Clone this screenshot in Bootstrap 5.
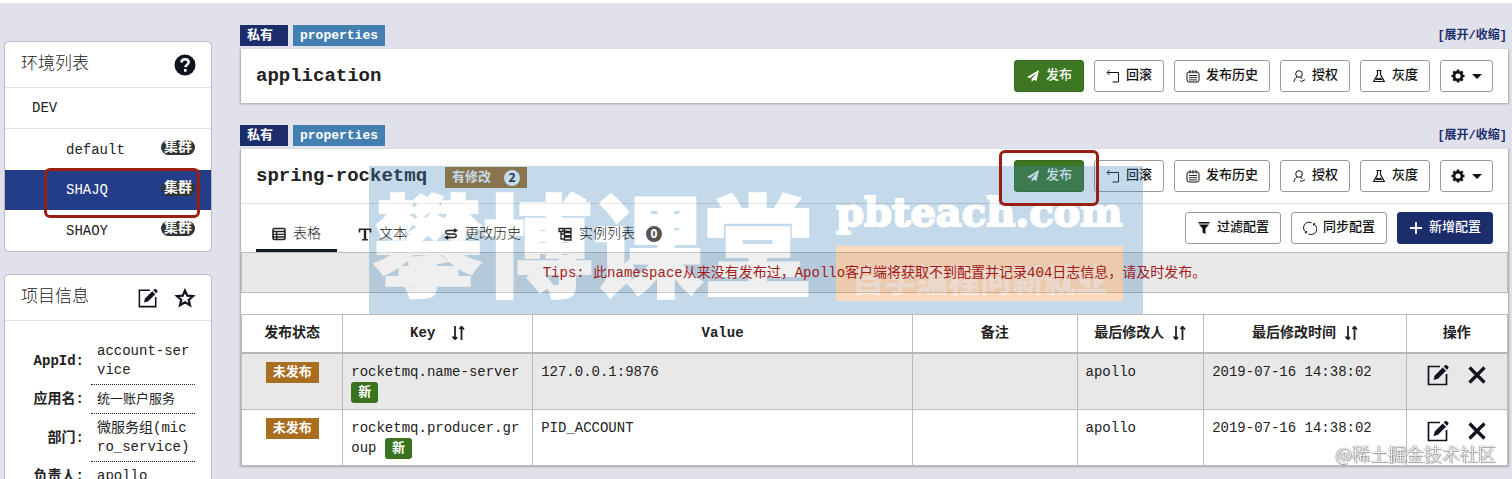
<!DOCTYPE html>
<html lang="zh-CN">
<head>
<meta charset="utf-8">
<meta name="viewport" content="width=device-width, initial-scale=1">
<title>Apollo 配置中心</title>
<link href="https://cdn.jsdelivr.net/npm/bootstrap@5.3.0/dist/css/bootstrap.min.css" rel="stylesheet">
<style>
body{font-family:"Liberation Mono","Noto Sans CJK SC",monospace;font-size:14px;line-height:20px;color:#222;background:#e0e1ea;border-top:3px solid #fff;height:100vh;overflow:hidden}
svg{display:block;fill:none;stroke:currentColor;flex:none}
.page{padding:22px 3px 0 4px;gap:28px}
.sidebar{flex:0 0 208px;margin-top:16px;gap:22px}
.side-panel{background:#fff;border:1px solid #b6b9c3;border-radius:5px}
.side-head{height:46px;padding:0 15px 0 16px;border-bottom:1px solid #dcdde3;gap:16px}
.side-head h2{font-size:17px;line-height:24px;font-weight:300;color:#222}
.icon-btn{border:0;background:none;padding:0;color:#101420}
.env-link{height:41px;padding:0 16px 0 61px;color:#222;text-decoration:none}
.env-root{padding-left:27px;border-bottom:1px solid #dcdde3}
.env-link.active{height:40px;background:#233d89;color:#fff}
.cluster{background:#333;color:#fff;font-size:14px;line-height:14px;font-weight:700;border-radius:8px;padding:0 3px;margin-bottom:4px;height:15px}
.hot{position:relative}
.hot::after{content:"";position:absolute;border:3px solid #991f12;border-radius:6px;z-index:4;pointer-events:none}
.hot-env::after{inset:-2px 11px -8px 39px}
.hot-release::after{inset:-11px -16px -15px -16px}
.info{margin:16px 16px 0 6px}
.info th{width:80px;text-align:right;padding:0 7px 0 0;vertical-align:middle;white-space:nowrap}
.info td{padding:5px 4px 4px 6px;border-bottom:1px dotted #222;line-height:19px;word-break:break-all}
.info .zh{font-size:13px}
.tags{gap:5px}
.tag{background:#1c2d6c;color:#fff;font-size:13px;line-height:21px;font-weight:700;padding:0 7px}
.tag-type{width:48px}
.tag-format{background:#447fb2}
.toggle{font-size:12px;font-weight:700;color:#1c2d6c;text-decoration:none;padding-right:2px}
.ns-panel{position:relative;background:#fff;box-shadow:0 1px 2px #a5a7b0;margin-top:3px;margin-bottom:22px;border-left:1px solid #b5b7bf;border-right:1px solid #b5b7bf}
.ns-head{height:54px;padding:0 15px}
.ns-title{font-size:19px;line-height:24px;font-weight:700;color:#222}
.act{--bs-btn-padding-x:11px;--bs-btn-padding-y:0;--bs-btn-border-radius:3px;--bs-btn-border-color:#9a9a9a;--bs-btn-bg:#fff;--bs-btn-color:#111;--bs-btn-hover-bg:#eee;--bs-btn-hover-border-color:#888;height:32px;font-size:13px;font-weight:500;line-height:20px;gap:6px;font-family:inherit}
.act.dropdown-toggle{--bs-btn-padding-x:10px}
.act.dropdown-toggle::after{border-width:5px 5px 0;margin-left:1px}
.act-green{--bs-btn-bg:#3d7721;--bs-btn-border-color:#35691c;--bs-btn-color:#fff}
.act-blue{--bs-btn-bg:#1c2d6c;--bs-btn-border-color:#1c2d6c;--bs-btn-color:#fff}
.changed{background:#a96f20;color:#fff;font-size:13px;font-weight:700;line-height:21px;padding:0 7px;margin-left:18px;margin-top:3px;gap:13px}
.dot{width:16px;height:16px;line-height:16px;border-radius:8px;text-align:center;font-family:"Open Sans",sans-serif;font-weight:700;font-size:12px}
.dot-light{background:#fff;color:#222}
.dot-dark{background:#555;color:#fff}
.tool-row{height:49px;padding:0 15px;border-top:1px solid #ddd}
.tab-list{gap:5px;position:relative;z-index:4}
.tab-list a{gap:7px;padding:0 16px;height:34px;color:#222;font-weight:300;text-decoration:none;border-bottom:3px solid transparent}
.tab-list a.active{border-color:#101c2b}
.tips{background:#e9e9e9;border:1px solid #bbb;height:41px;color:#a31a1a;margin-bottom:21px}
.tips span{position:relative;z-index:4}
.cfg{table-layout:fixed;width:100%}
.cfg th,.cfg td{border:1px solid #bbb;padding:8px}
.cfg th{text-align:center;font-weight:700}
.cfg thead tr{height:38px;border-bottom:2px solid #b5b5b5}
.cfg td{vertical-align:top;word-break:break-all;padding-bottom:6px}
.cfg tbody tr:nth-child(odd){background:#e8e8e8}
.st,.fresh{color:#fff;background:#a96f20;font-size:13px;font-weight:700;padding:3px 7px}
.fresh{background:#3a7320;border-radius:3px}
.ops{gap:19px;padding-top:2px}
.brand{position:absolute;left:128px;top:17px;width:774px;height:148px;background:#3e84b9;opacity:.3;z-index:3;pointer-events:none;color:#fff;padding:8px 20px 0 4px}
.brand-cn{font-size:110px;line-height:132px;font-weight:900;-webkit-text-stroke:2px #fff;white-space:nowrap;font-family:"Noto Sans CJK SC",sans-serif}
.brand-site{font-family:"DejaVu Serif",serif;font-weight:700;font-size:40px;line-height:44px;-webkit-text-stroke:2px #fff;margin-top:16px}
.brand-slogan{background:#f28426;width:287px;height:55px;font-size:32px;line-height:46px;color:#efb68c;font-weight:900;margin-top:12px;padding:9px 0 0 16px;white-space:nowrap;font-family:"Noto Sans CJK SC",sans-serif}
.credit{position:fixed;right:16px;bottom:14px;font-family:"Noto Sans CJK SC",sans-serif;font-size:18px;line-height:24px;font-weight:300;color:#fff;text-shadow:0 0 1px #777,1px 1px 1px #888,-1px 0 1px #999}
</style>
</head>
<body>
<svg width="0" height="0" class="position-absolute" aria-hidden="true">
  <symbol id="i-plane" viewBox="0 0 14 14"><path d="M13 1 1 8l3 1.300L11 3.500 5.500 10l.3 3 1.700-2.200 3 1.200z" fill="currentColor" stroke="none"/></symbol>
  <symbol id="i-back" viewBox="0 0 14 14"><path d="M3.500 1 1 3.500 3.500 6M1.500 3.500h11v9.500H6.500"/></symbol>
  <symbol id="i-cal" viewBox="0 0 14 14"><rect x="1" y="3" width="12" height="10" rx="2"/><path d="M4 1v3.500M7 1v3.500M10 1v3.500M3 6.500h8M3 8.700h8M3 10.900h8" stroke-width=".9"/></symbol>
  <symbol id="i-user" viewBox="0 0 14 14"><circle cx="7" cy="5" r="3.300"/><path d="M2 13c.3-2.600 1.500-4.300 3.300-5.200M8.600 7.800l1.700 2.200M8 11.500l1.500 1 3.500-1.800"/></symbol>
  <symbol id="i-flask" viewBox="0 0 14 14"><path d="M4.500 1.500h5M5.500 1.500v4L1.700 12.500h10.600L8.500 5.500v-4" stroke-width="1.200"/><path d="M3.500 11 5 8.500l2 1 1.500-1L10.500 11z" fill="currentColor" stroke="none"/></symbol>
  <symbol id="i-gear" viewBox="0 0 14 14"><circle cx="7" cy="7" r="3.900" stroke-width="2.600"/><path d="M7 .5v2.500M7 11v2.500M.5 7H3M11 7h2.500M2.400 2.400l1.700 1.700M9.900 9.900l1.700 1.700M11.600 2.400 9.900 4.100M4.100 9.900l-1.700 1.700" stroke-width="2.600"/></symbol>
  <symbol id="i-edit" viewBox="0 0 22 22"><path d="M13 2.500H1.500v18h18V10" stroke-width="1.700"/><path d="m6.500 16 1.200-4.500 8-8 3.300 3.300-8 8zM16.700 2.500l1.200-1.200q1-.8 2 0l1.300 1.300q.8 1 0 2L20 5.800z" fill="currentColor" stroke="none"/></symbol>
  <symbol id="i-x" viewBox="0 0 18 18"><path d="m1.500 1.500 15 15M16.500 1.500l-15 15" stroke-width="3.200"/></symbol>
  <symbol id="i-sort" viewBox="0 0 14 16"><path d="M4 1v13M1.500 11.500 4 14.500M10.500 15V2M10.500 1.500 13 4.500M4 14.500l2-2.500M8.500 4l2-2.500" stroke-width="1.800"/></symbol>
</svg>

<div class="page d-flex align-items-start">
  <aside class="sidebar d-flex flex-column">
    <section class="side-panel">
      <div class="side-head d-flex align-items-center">
        <h2 class="m-0 me-auto">环境列表</h2>
        <button class="icon-btn" aria-label="帮助"><svg width="22" height="22" viewBox="0 0 22 22"><circle cx="11" cy="11" r="10.500" fill="currentColor" stroke="none"/><path d="M7.500 8.500c0-2 1.400-3.300 3.500-3.300s3.700 1.200 3.700 3c0 2.500-3.300 2.500-3.300 5" stroke="#fff" stroke-width="2.500"/><path d="M11.300 15v2.700" stroke="#fff" stroke-width="2.600"/></svg></button>
      </div>
      <nav>
        <a href="#" class="env-link env-root d-flex align-items-center">DEV</a>
        <a href="#" class="env-link d-flex align-items-center justify-content-between">default<span class="cluster">集群</span></a>
        <a href="#" class="env-link active hot hot-env d-flex align-items-center justify-content-between">SHAJQ<span class="cluster">集群</span></a>
        <a href="#" class="env-link d-flex align-items-center justify-content-between">SHAOY<span class="cluster">集群</span></a>
      </nav>
    </section>
    <section class="side-panel">
      <div class="side-head d-flex align-items-center">
        <h2 class="m-0 me-auto">项目信息</h2>
        <button class="icon-btn" aria-label="编辑"><svg width="20" height="20"><use href="#i-edit"/></svg></button>
        <button class="icon-btn" aria-label="收藏"><svg width="22" height="20" viewBox="0 0 22 20"><path d="m11 2.500 2.300 5.100 5.700.5-4.300 3.700 1.300 5.400-5-2.900-5 2.900 1.300-5.400L3 8.100l5.700-.5z" stroke-width="2.200"/></svg></button>
      </div>
      <div class="info">
        <table class="w-100">
          <tr><th scope="row">AppId:</th><td>account-service</td></tr>
          <tr><th scope="row">应用名:</th><td class="zh">统一账户服务</td></tr>
          <tr><th scope="row">部门:</th><td>微服务组(micro_service)</td></tr>
          <tr><th scope="row">负责人:</th><td>apollo</td></tr>
        </table>
      </div>
    </section>
  </aside>

  <main class="flex-grow-1">
    <section>
      <div class="tags d-flex align-items-center">
        <span class="tag tag-type">私有</span><span class="tag tag-format">properties</span>
        <a href="#" class="toggle ms-auto">[展开/收缩]</a>
      </div>
      <div class="ns-panel">
        <div class="ns-head d-flex align-items-center">
          <h1 class="ns-title m-0 me-auto">application</h1>
          <div class="d-flex" style="gap:10px">
            <button class="btn act act-green d-flex align-items-center"><svg width="14" height="14"><use href="#i-plane"/></svg>发布</button>
            <button class="btn act d-flex align-items-center"><svg width="14" height="14"><use href="#i-back"/></svg>回滚</button>
            <button class="btn act d-flex align-items-center"><svg width="14" height="14"><use href="#i-cal"/></svg>发布历史</button>
            <button class="btn act d-flex align-items-center"><svg width="14" height="14"><use href="#i-user"/></svg>授权</button>
            <button class="btn act d-flex align-items-center"><svg width="14" height="14"><use href="#i-flask"/></svg>灰度</button>
            <button class="btn act dropdown-toggle d-flex align-items-center" aria-label="设置"><svg width="14" height="14"><use href="#i-gear"/></svg></button>
          </div>
        </div>
      </div>
    </section>

    <section>
      <div class="tags d-flex align-items-center">
        <span class="tag tag-type">私有</span><span class="tag tag-format">properties</span>
        <a href="#" class="toggle ms-auto">[展开/收缩]</a>
      </div>
      <div class="ns-panel">
        <div class="ns-head d-flex align-items-center">
          <h1 class="ns-title m-0">spring-rocketmq</h1>
          <span class="changed d-flex align-items-center me-auto">有修改<span class="dot dot-light">2</span></span>
          <div class="d-flex" style="gap:10px">
            <button class="btn act act-green hot hot-release d-flex align-items-center"><svg width="14" height="14"><use href="#i-plane"/></svg>发布</button>
            <button class="btn act d-flex align-items-center"><svg width="14" height="14"><use href="#i-back"/></svg>回滚</button>
            <button class="btn act d-flex align-items-center"><svg width="14" height="14"><use href="#i-cal"/></svg>发布历史</button>
            <button class="btn act d-flex align-items-center"><svg width="14" height="14"><use href="#i-user"/></svg>授权</button>
            <button class="btn act d-flex align-items-center"><svg width="14" height="14"><use href="#i-flask"/></svg>灰度</button>
            <button class="btn act dropdown-toggle d-flex align-items-center" aria-label="设置"><svg width="14" height="14"><use href="#i-gear"/></svg></button>
          </div>
        </div>
        <div class="tool-row d-flex align-items-end">
          <nav class="tab-list d-flex me-auto">
            <a href="#" class="active d-flex align-items-center"><svg width="14" height="14" viewBox="0 0 14 14"><rect x="1" y="1.500" width="12" height="11" rx="1.500" stroke-width="1.600"/><path d="M1 4.500h12M1 7.300h12M1 10h12M4.700 4v8.500" stroke-width="1.300"/></svg>表格</a>
            <a href="#" class="d-flex align-items-center"><svg width="14" height="14" viewBox="0 0 14 14"><path d="M1.500 5.500V2.200h11v3.300" stroke-width="1.600"/><path d="M7 2v10.500" stroke-width="2.400"/><path d="M4 12.800h6" stroke-width="1.400"/></svg>文本</a>
            <a href="#" class="d-flex align-items-center"><svg width="14" height="14" viewBox="0 0 14 14"><path d="M12 3.500H3.500a1.700 1.700 0 0 0 0 3.500h7a1.700 1.700 0 0 1 0 3.500H2M10 2l2.500 1.500L10 5M4 9l-2.500 1.500L4 12" stroke-width="1.500"/></svg>更改历史</a>
            <a href="#" class="d-flex align-items-center"><svg width="14" height="14" viewBox="0 0 14 14"><path d="M1 1.500h4v3H1zM3 4.500V12h3M3 7h3M6.500 1.500H13v3H6.500zM6.500 5.700H13v3H6.500zM6.500 10H13v3H6.500z" stroke-width="1.300"/></svg>实例列表<span class="dot dot-dark ms-1">0</span></a>
          </nav>
          <div class="d-flex mb-1 pb-1" style="gap:10px">
            <button class="btn act d-flex align-items-center"><svg width="14" height="14" viewBox="0 0 14 14"><path d="M1.500 1h11v1.500h-11zM2 3.500h10L8.500 7.500V13l-3-1.500v-4z" fill="currentColor" stroke="none"/></svg>过滤配置</button>
            <button class="btn act d-flex align-items-center"><svg width="14" height="14" viewBox="0 0 14 14"><path d="M3 11.300A5.500 5.500 0 0 1 8.500 1.800M11 3.200A5.500 5.500 0 0 1 5.500 12.800M1.800 11.800H3.500V10M12.200 2.700h-1.700v1.800"/></svg>同步配置</button>
            <button class="btn act act-blue d-flex align-items-center"><svg width="14" height="14" viewBox="0 0 14 14"><path d="M7 1v12M1 7h12" stroke-width="1.800"/></svg>新增配置</button>
          </div>
        </div>
        <div class="tips d-flex align-items-center justify-content-center"><span>Tips: 此namespace从来没有发布过，Apollo客户端将获取不到配置并记录404日志信息，请及时发布。</span></div>
        <table class="cfg">
          <colgroup><col style="width:8%"><col style="width:15%"><col style="width:30%"><col style="width:13%"><col style="width:10%"><col style="width:16%"><col style="width:8%"></colgroup>
          <thead><tr>
            <th scope="col">发布状态</th>
            <th scope="col"><div class="d-flex align-items-center justify-content-center gap-3">Key<svg width="14" height="16"><use href="#i-sort"/></svg></div></th>
            <th scope="col">Value</th>
            <th scope="col">备注</th>
            <th scope="col"><div class="d-flex align-items-center justify-content-center gap-2">最后修改人<svg width="14" height="16"><use href="#i-sort"/></svg></div></th>
            <th scope="col"><div class="d-flex align-items-center justify-content-center gap-2">最后修改时间<svg width="14" height="16"><use href="#i-sort"/></svg></div></th>
            <th scope="col">操作</th>
          </tr></thead>
          <tbody>
            <tr>
              <td class="text-center"><span class="st">未发布</span></td>
              <td>rocketmq.name-server <span class="fresh">新</span></td>
              <td>127.0.0.1:9876</td><td></td><td>apollo</td><td>2019-07-16 14:38:02</td>
              <td><div class="ops d-flex align-items-center justify-content-center"><button class="icon-btn" aria-label="修改"><svg width="22" height="22"><use href="#i-edit"/></svg></button><button class="icon-btn" aria-label="删除"><svg width="18" height="18"><use href="#i-x"/></svg></button></div></td>
            </tr>
            <tr>
              <td class="text-center"><span class="st">未发布</span></td>
              <td>rocketmq.producer.group <span class="fresh">新</span></td>
              <td>PID_ACCOUNT</td><td></td><td>apollo</td><td>2019-07-16 14:38:02</td>
              <td><div class="ops d-flex align-items-center justify-content-center"><button class="icon-btn" aria-label="修改"><svg width="22" height="22"><use href="#i-edit"/></svg></button><button class="icon-btn" aria-label="删除"><svg width="18" height="18"><use href="#i-x"/></svg></button></div></td>
            </tr>
          </tbody>
        </table>
        <div class="brand d-flex justify-content-between">
          <div class="brand-cn">攀博课堂</div>
          <div><div class="brand-site">pbteach.com</div><div class="brand-slogan">自学编程向新就业</div></div>
        </div>
      </div>
    </section>
  </main>
</div>
<div class="credit">@稀土掘金技术社区</div>
<script src="https://cdn.jsdelivr.net/npm/bootstrap@5.3.0/dist/js/bootstrap.bundle.min.js"></script>
</body>
</html>
